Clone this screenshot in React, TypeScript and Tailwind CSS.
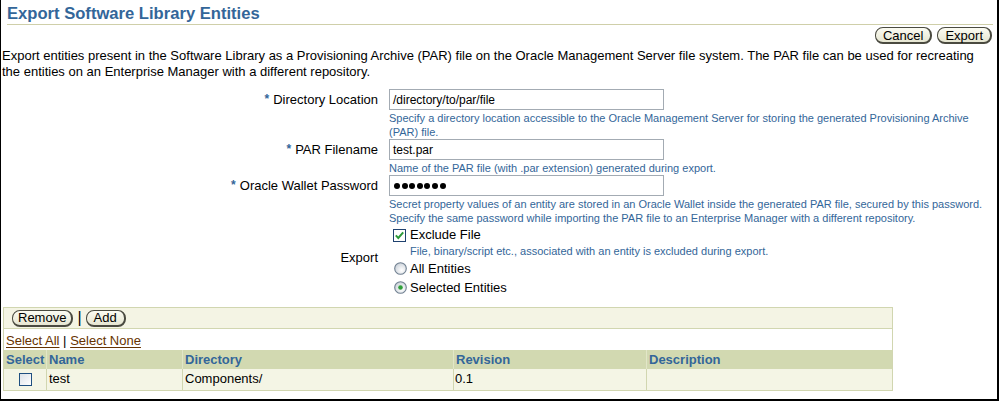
import React from "react";

const Btn = ({ children, tight }: { children: React.ReactNode; tight?: boolean }) => (
  <button
    type="button"
    className={`h-[17px] ${tight ? "px-[5px]" : "px-[7px]"} rounded-[8px] border border-[#4a4a40] border-r-2 border-b-2 bg-gradient-to-b from-[#fbfbf2] to-[#e6e6d2] text-[13px] leading-[13px] text-black`}
  >
    {children}
  </button>
);

const Star = () => (
  <span className="text-[#336699] text-[12px] font-bold mr-[4px] relative -top-[1px]">*</span>
);

const Radio = ({ on }: { on?: boolean }) => (
  <svg width="13" height="13" viewBox="0 0 13 13">
    <defs>
      <radialGradient id={on ? "rgOn" : "rgOff"} cx="0.6" cy="0.65" r="0.7">
        <stop offset="0" stopColor="#ffffff" />
        <stop offset="1" stopColor="#c9d0d8" />
      </radialGradient>
    </defs>
    <circle cx="6.5" cy="6.5" r="5.8" fill={on ? "url(#rgOn)" : "url(#rgOff)"} stroke="#6f7f90" strokeWidth="1.1" />
    {on && <circle cx="6.5" cy="6.5" r="2.3" fill="#2f9f3a" />}
  </svg>
);

const Field = ({ value, password }: { value?: string; password?: boolean }) => (
  <div className="w-[275px] h-[21px] border border-[#a3abb3] bg-white flex items-center pl-[3px] text-[12px] text-black">
    {password ? (
      <div className="flex gap-[1.6px] pl-[1px]">
        {[0, 1, 2, 3, 4, 5, 6].map((i) => (
          <span key={i} className="w-[6px] h-[6px] rounded-full bg-black" />
        ))}
      </div>
    ) : (
      value
    )}
  </div>
);

const Help = ({ children, className = "" }: { children: React.ReactNode; className?: string }) => (
  <div className={`text-[11px] leading-[14px] text-[#336699] w-[598px] mt-[1px] ${className}`}>{children}</div>
);

export default function App() {
  return (
    <div className="w-[999px] h-[401px] overflow-hidden bg-white border-l border-r-2 border-b-2 border-black font-['Liberation_Sans',Arial,sans-serif] text-black">
      <div className="ml-[6px] mr-[4px] mt-[4px] border-b border-[#cfcfa9] h-[21px]">
        <h1 className="text-[16.6px] leading-[20px] font-bold text-[#336699]">Export Software Library Entities</h1>
      </div>
      <div className="flex justify-end gap-[5px] mr-[5px] mt-[2px]">
        <Btn>Cancel</Btn>
        <Btn>Export</Btn>
      </div>
      <p className="pl-[1px] mr-[12px] mt-[4px] text-[13px] leading-[16px]">
        Export entities present in the Software Library as a Provisioning Archive (PAR) file on the Oracle Management
        Server file system. The PAR file can be used for recreating the entities on an Enterprise Manager with a
        different repository.
      </p>

      <div className="grid grid-cols-[377px_1fr] gap-x-[11px] mt-[9px] text-[13px]">
        <div className="h-[21px] flex items-center justify-end">
          <Star />
          Directory Location
        </div>
        <div>
          <Field value="/directory/to/par/file" />
          <Help>
            Specify a directory location accessible to the Oracle Management Server for storing the generated
            Provisioning Archive (PAR) file.
          </Help>
        </div>

        <div className="h-[21px] flex items-center justify-end">
          <Star />
          PAR Filename
        </div>
        <div>
          <Field value="test.par" />
          <Help>Name of the PAR file (with .par extension) generated during export.</Help>
        </div>

        <div className="h-[21px] flex items-center justify-end">
          <Star />
          Oracle Wallet Password
        </div>
        <div>
          <Field password />
          <Help>
            Secret property values of an entity are stored in an Oracle Wallet inside the generated PAR file, secured by
            this password. Specify the same password while importing the PAR file to an Enterprise Manager with a
            different repository.
          </Help>
        </div>

        <div />
        <div className="mt-[2px]">
          <div className="h-[16px] flex items-center gap-[4px] ml-[4px]">
            <svg width="13" height="13" viewBox="0 0 13 13">
              <rect x="0.5" y="0.5" width="12" height="12" fill="#ffffff" stroke="#1f416f" />
              <path d="M2.8 6.4 L5.3 9 L10.2 3.4" stroke="#2d9a3b" strokeWidth="2" fill="none" />
            </svg>
            <span>Exclude File</span>
          </div>
          <Help className="ml-[21px] mt-0">
            File, binary/script etc., associated with an entity is excluded during export.
          </Help>
        </div>

        <div className="flex justify-end mt-[-8px] h-[16px] leading-[16px]">Export</div>
        <div className="mt-[1px]">
          <div className="h-[19px] flex items-center gap-[3px] ml-[5px]">
            <Radio />
            <span>All Entities</span>
          </div>
          <div className="h-[19px] flex items-center gap-[3px] ml-[5px]">
            <Radio on />
            <span>Selected Entities</span>
          </div>
        </div>
      </div>

      <div className="ml-[2px] w-[890px] mt-[10px] border border-[#d1d6b0] text-[13px]">
        <div className="h-[21px] bg-[#f4f4e4] border-b border-[#d1d6b0] flex items-center pl-[8px] gap-[4px]">
          <Btn tight>Remove</Btn>
          <span className="text-[16px] leading-[16px] text-black">|</span>
          <Btn>Add</Btn>
        </div>
        <div className="h-[21px] pt-[4px] pl-[2px] leading-[16px] bg-white">
          <a className="text-[#663300] underline underline-offset-[2px]" href="#">
            Select All
          </a>{" "}
          |{" "}
          <a className="text-[#663300] underline underline-offset-[2px]" href="#">
            Select None
          </a>
        </div>
        <div className="grid grid-cols-[42px_136px_271px_193px_1fr] h-[19px] bg-[#d2d9b1] font-bold text-[#336699] leading-[19px]">
          <div className="pl-[2px]">Select</div>
          <div className="pl-[2px] border-l border-[#e2e6c8]">Name</div>
          <div className="pl-[2px] border-l border-[#e2e6c8]">Directory</div>
          <div className="pl-[2px] border-l border-[#e2e6c8]">Revision</div>
          <div className="pl-[2px] border-l border-[#e2e6c8]">Description</div>
        </div>
        <div className="grid grid-cols-[42px_136px_271px_193px_1fr] h-[21px] bg-[#f4f5e5] leading-[20px]">
          <div className="flex items-center justify-center pl-[1px]">
            <span className="w-[13px] h-[13px] border border-[#1f4f80] bg-gradient-to-br from-[#dde2e8] to-[#ffffff]" />
          </div>
          <div className="pl-[2px] border-l border-[#d1d6b0]">test</div>
          <div className="pl-[2px] border-l border-[#d1d6b0]">Components/</div>
          <div className="pl-[1px] border-l border-[#d1d6b0]">0.1</div>
          <div className="border-l border-[#d1d6b0]" />
        </div>
      </div>
    </div>
  );
}
